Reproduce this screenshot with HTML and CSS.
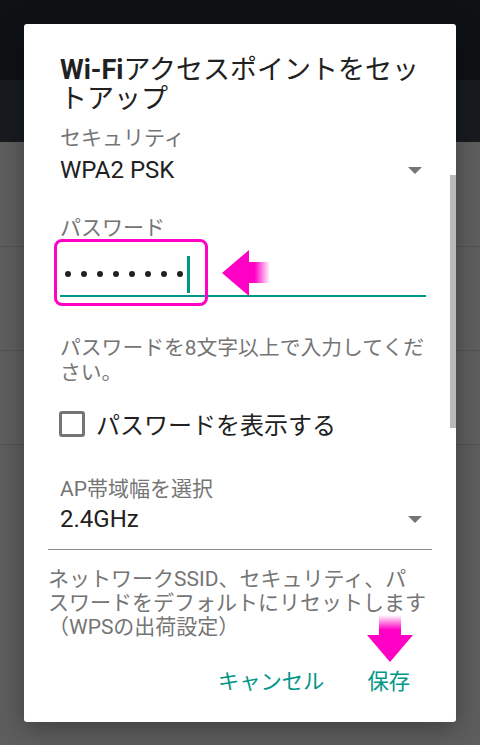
FILE: index.html
```html
<!DOCTYPE html>
<html lang="ja">
<head>
 <meta charset="UTF-8">
 <title>Wi-Fiアクセスポイントをセットアップ</title>
 <link rel="stylesheet" href="styles.css">
</head>
<body>
<div class="screen">
 <div class="status-bar"></div>
 <div class="toolbar"></div>
 <div class="list">
  <div class="list-row row-1"></div>
  <div class="list-row row-2"></div>
  <div class="list-row row-3"></div>
 </div>
</div>

<div class="dialog">
 <h2 class="dialog-title"><span class="latin-bold">Wi-Fi</span>アクセスポイントをセッ<br>トアップ</h2>
 <div class="dialog-body">
  <div class="scroll-area">
   <div class="field-label">セキュリティ</div>
   <div class="select-row first">
    <span>WPA2 PSK</span>
    <span class="caret"></span>
   </div>

   <div class="field-label pass-label">パスワード</div>
   <div class="pass-input">
    <span class="dot"></span><span class="dot"></span><span class="dot"></span><span class="dot"></span>
    <span class="dot"></span><span class="dot"></span><span class="dot"></span><span class="dot"></span>
    <span class="cursor"></span>
   </div>
   <p class="helper">パスワードを8文字以上で入力してくだ<br>さい。</p>

   <label class="check-row">
    <span class="checkbox"></span>
    <span>パスワードを表示する</span>
   </label>

   <div class="field-label band-label">AP帯域幅を選択</div>
   <div class="select-row second">
    <span>2.4GHz</span>
    <span class="caret"></span>
   </div>
  </div>
  <hr class="divider">
  <p class="reset-note">ネットワークSSID、セキュリティ、パ<br>スワードをデフォルトにリセットします<br>（WPSの出荷設定）</p>
 </div>
 <div class="actions">
  <button class="text-btn">キャンセル</button>
  <button class="text-btn">保存</button>
 </div>
 <div class="scrollbar"></div>
</div>

<!-- annotation marks -->
<div class="mark-box"></div>
<svg class="arrow-left" width="52" height="50" viewBox="0 0 52 50">
 <defs>
  <linearGradient id="fadeRight" x1="0" y1="0" x2="1" y2="0">
   <stop offset="0" stop-color="#ff00c4"/>
   <stop offset="0.3" stop-color="#ff00c4"/>
   <stop offset="1" stop-color="#ff00c4" stop-opacity="0"/>
  </linearGradient>
 </defs>
 <rect x="28" y="14" width="22" height="21" fill="url(#fadeRight)"/>
 <polygon points="2,25 29,2 29,48" fill="#ff00c4"/>
</svg>
<svg class="arrow-down" width="50" height="52" viewBox="0 0 50 52">
 <defs>
  <linearGradient id="fadeUp" x1="0" y1="1" x2="0" y2="0">
   <stop offset="0" stop-color="#ff00c4"/>
   <stop offset="0.3" stop-color="#ff00c4"/>
   <stop offset="1" stop-color="#ff00c4" stop-opacity="0"/>
  </linearGradient>
 </defs>
 <rect x="14" y="3" width="22" height="21" fill="url(#fadeUp)"/>
 <polygon points="2,23 48,23 25,50" fill="#ff00c4"/>
</svg>
</body>
</html>
```

FILE: styles.css
```css
* {
    margin: 0;
    padding: 0;
    box-sizing: border-box;
}

body {
    width: 480px;
    height: 745px;
    overflow: hidden;
    background-color: #5e5e5e;
    font-family: Roboto, "Noto Sans CJK JP", sans-serif;
    color: #212121;
}

/* dimmed screen behind the dialog */
.status-bar {
    height: 80px;
    background-color: #0f1215;
}
.toolbar {
    height: 62px;
    background-color: #171b1f;
}
.list-row {
    border-bottom: 1px solid #535353;
    background-color: #5f5f5f;
}
.row-1 { height: 105px; }
.row-2 { height: 104px; }
.row-3 { height: 94px; }

/* dialog */
.dialog {
    position: absolute;
    left: 24px;
    top: 24px;
    width: 432px;
    height: 698px;
    background-color: #fff;
    border-radius: 3px;
    padding: 32px 0 0;
    box-shadow: 0 6px 28px rgba(0, 0, 0, 0.35);
}

.dialog-title {
    margin-left: 36px;
    font-size: 27px;
    line-height: 29px;
    font-weight: 400;
}
.latin-bold {
    font-weight: 700;
}

.dialog-body {
    padding: 0 24px;
}
.scroll-area {
    padding: 0 6px 0 12px;
}

.field-label {
    margin-top: 12px;
    font-size: 21px;
    line-height: 24px;
    color: #757575;
}
.pass-label { margin-top: 32px; }
.band-label { margin-top: 36px; }

.select-row {
    display: flex;
    align-items: center;
    justify-content: space-between;
    font-size: 24px;
    line-height: 28px;
}
.select-row.first { margin-top: 6px; }
.select-row.second { margin-top: 4px; }

.caret {
    width: 0;
    height: 0;
    margin-right: 4px;
    border-left: 7px solid transparent;
    border-right: 7px solid transparent;
    border-top: 7px solid #757575;
}

.pass-input {
    display: flex;
    align-items: center;
    gap: 10px;
    height: 44px;
    margin-top: 13px;
    padding-left: 5px;
    border-bottom: 2px solid #009688;
}
.dot {
    width: 6px;
    height: 6px;
    border-radius: 50%;
    background-color: #212121;
}
.cursor {
    width: 3px;
    height: 37px;
    margin-left: -6px;
    background-color: #009688;
}

.helper {
    margin-top: 39px;
    font-size: 20.8px;
    line-height: 25px;
    color: #757575;
    white-space: nowrap;
}

.check-row {
    display: flex;
    align-items: flex-start;
    gap: 11px;
    margin-top: 25px;
    font-size: 24px;
    line-height: 30px;
}
.checkbox {
    width: 26px;
    height: 26px;
    margin-left: -1px;
    border: 3px solid #757575;
    border-radius: 3px;
}

.divider {
    margin-top: 16px;
    border: none;
    border-top: 1px solid #8c8c8c;
}

.reset-note {
    margin-top: 17px;
    font-size: 21px;
    line-height: 24px;
    color: #757575;
    white-space: nowrap;
}

.actions {
    display: flex;
    justify-content: flex-end;
    gap: 43px;
    margin-top: 29px;
    padding-right: 46px;
}
.text-btn {
    border: none;
    background: none;
    font-family: Roboto, "Noto Sans CJK JP", sans-serif;
    font-size: 21.3px;
    line-height: 28px;
    font-weight: 400;
    color: #009688;
}

.scrollbar {
    position: absolute;
    right: 0;
    top: 151px;
    width: 6px;
    height: 253px;
    background-color: #bababa;
}

/* pink annotation marks drawn over the screenshot */
.mark-box {
    position: absolute;
    left: 54px;
    top: 239px;
    width: 154px;
    height: 67px;
    border: 3px solid #ff00c4;
    border-radius: 8px;
}
.arrow-left {
    position: absolute;
    left: 220px;
    top: 248px;
}
.arrow-down {
    position: absolute;
    left: 365px;
    top: 612px;
}
```
